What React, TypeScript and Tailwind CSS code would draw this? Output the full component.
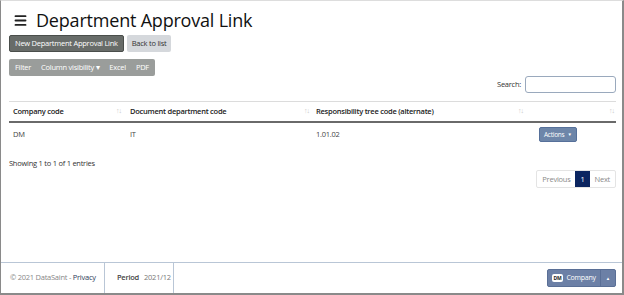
import { Menu } from 'lucide-react'

const font = { fontFamily: '"Open Sans", "Noto Sans", sans-serif' }

function SortIcon() {
  return <span className="text-[7px] tracking-[-1px] text-[#c8c8c8]">↑↓</span>
}

export default function App() {
  return (
    <div
      className="flex h-[295px] w-[624px] flex-col border-t border-l border-t-[#dddddd] border-l-[#8a8a8a] border-r-2 border-b-2 border-r-[#8a8a8a] border-b-[#8a8a8a] bg-white text-[#333] tracking-[-0.25px]"
      style={font}
    >
      <div className="flex flex-1 flex-col pl-2 pr-[6px]">
        {/* Title */}
        <div className="flex h-[34px] items-center gap-2 pl-1 pt-1">
          <Menu className="h-[15px] w-[15px] text-[#222]" strokeWidth={3} />
          <h1 className="text-[18px] font-medium leading-none tracking-[-0.2px] text-[#111]">Department Approval Link</h1>
        </div>

        <div className="flex gap-[3px]">
          <span className="flex h-[17px] items-center rounded-[2px] border border-[#4a4e4b] bg-[#686c69] px-[5px] text-[7.5px] text-white">
            New Department Approval Link
          </span>
          <span className="flex h-[17px] items-center rounded-[2px] bg-[#d5d8dc] px-[5px] text-[7.5px] text-[#333]">
            Back to list
          </span>
        </div>

        <div className="mt-[7px] flex h-[17px] w-fit items-center gap-[10px] rounded-[2px] bg-[#9a9d9b] px-[6px] text-[7.5px] text-white">
          <span>Filter</span>
          <span>Column visibility ▾</span>
          <span>Excel</span>
          <span>PDF</span>
        </div>

        <div className="flex items-center justify-end gap-[4px]">
          <span className="text-[7.5px]">Search:</span>
          <span className="h-[17px] w-[91px] rounded-[3px] border border-[#9aa9bd]" />
        </div>

        {/* Table */}
        <div className="mt-[8px] border-t border-[#dcdcdc] text-[7.5px]">
          <div className="grid h-[21px] grid-cols-[116px_186px_214px_1fr] items-center border-b-2 border-[#6a6a6a] font-semibold text-[#222]">
            <div className="flex justify-between pl-[4px] pr-[4px]">
              <span>Company code</span>
              <SortIcon />
            </div>
            <div className="flex justify-between pl-[5px] pr-[2px]">
              <span>Document department code</span>
              <SortIcon />
            </div>
            <div className="flex justify-between pl-[5px] pr-[2px]">
              <span>Responsibility tree code (alternate)</span>
              <SortIcon />
            </div>
            <div className="flex justify-end pr-[2px]">
              <SortIcon />
            </div>
          </div>
          <div className="grid h-[23px] grid-cols-[116px_186px_214px_1fr] items-center text-[#444]">
            <div className="pl-[4px]">DM</div>
            <div className="pl-[5px]">IT</div>
            <div className="pl-[5px]">1.01.02</div>
            <div className="pl-[14px]">
              <span className="inline-flex h-[15px] items-center gap-[3px] rounded-[2px] border border-[#56709a] bg-[#6d86a9] px-[4px] text-[6.5px] text-white">
                Actions <span className="text-[4.5px]">▼</span>
              </span>
            </div>
          </div>
        </div>

        <div className="mt-[12px] text-[7.5px] text-[#333]">Showing 1 to 1 of 1 entries</div>

        <div className="mt-[1px] flex justify-end">
          <div className="flex h-[18px] rounded-[2px] border border-[#e4e4e4] text-[7.5px]">
            <span className="flex items-center px-[5px] text-[#8a8a8a]">Previous</span>
            <span className="flex items-center bg-[#0b2560] px-[5px] text-white">1</span>
            <span className="flex items-center px-[5px] text-[#8a8a8a]">Next</span>
          </div>
        </div>
      </div>

      {/* Footer */}
      <div className="flex h-[31px] items-stretch border-t border-[#b9c6d6] text-[7.5px]">
        <div className="flex w-[104px] items-center border-r border-[#b9c6d6] pl-[9px] text-[#888]">
          © 2021 DataSaint -&nbsp;<span className="text-[#2d3c5a]">Privacy</span>
        </div>
        <div className="flex w-[69px] items-center gap-[5px] border-r border-[#b9c6d6] pl-[12px]">
          <span className="font-semibold text-[#444]">Period</span>
          <span className="text-[#777]">2021/12</span>
        </div>
        <div className="flex flex-1 items-center justify-end pr-[6px]">
          <div className="flex h-[18px] items-stretch rounded-[2px] border border-[#5a6f96] bg-[#6c80a6] text-[7px] text-white">
            <span className="flex items-center gap-[3px] px-[4px]">
              <span className="rounded-[2px] bg-white px-[2px] text-[5px] font-bold leading-[8px] text-[#222]">DM</span>
              Company
            </span>
            <span className="flex items-center border-l border-[#5a6f96] px-[5px] text-[4.5px]">▲</span>
          </div>
        </div>
      </div>
    </div>
  )
}
